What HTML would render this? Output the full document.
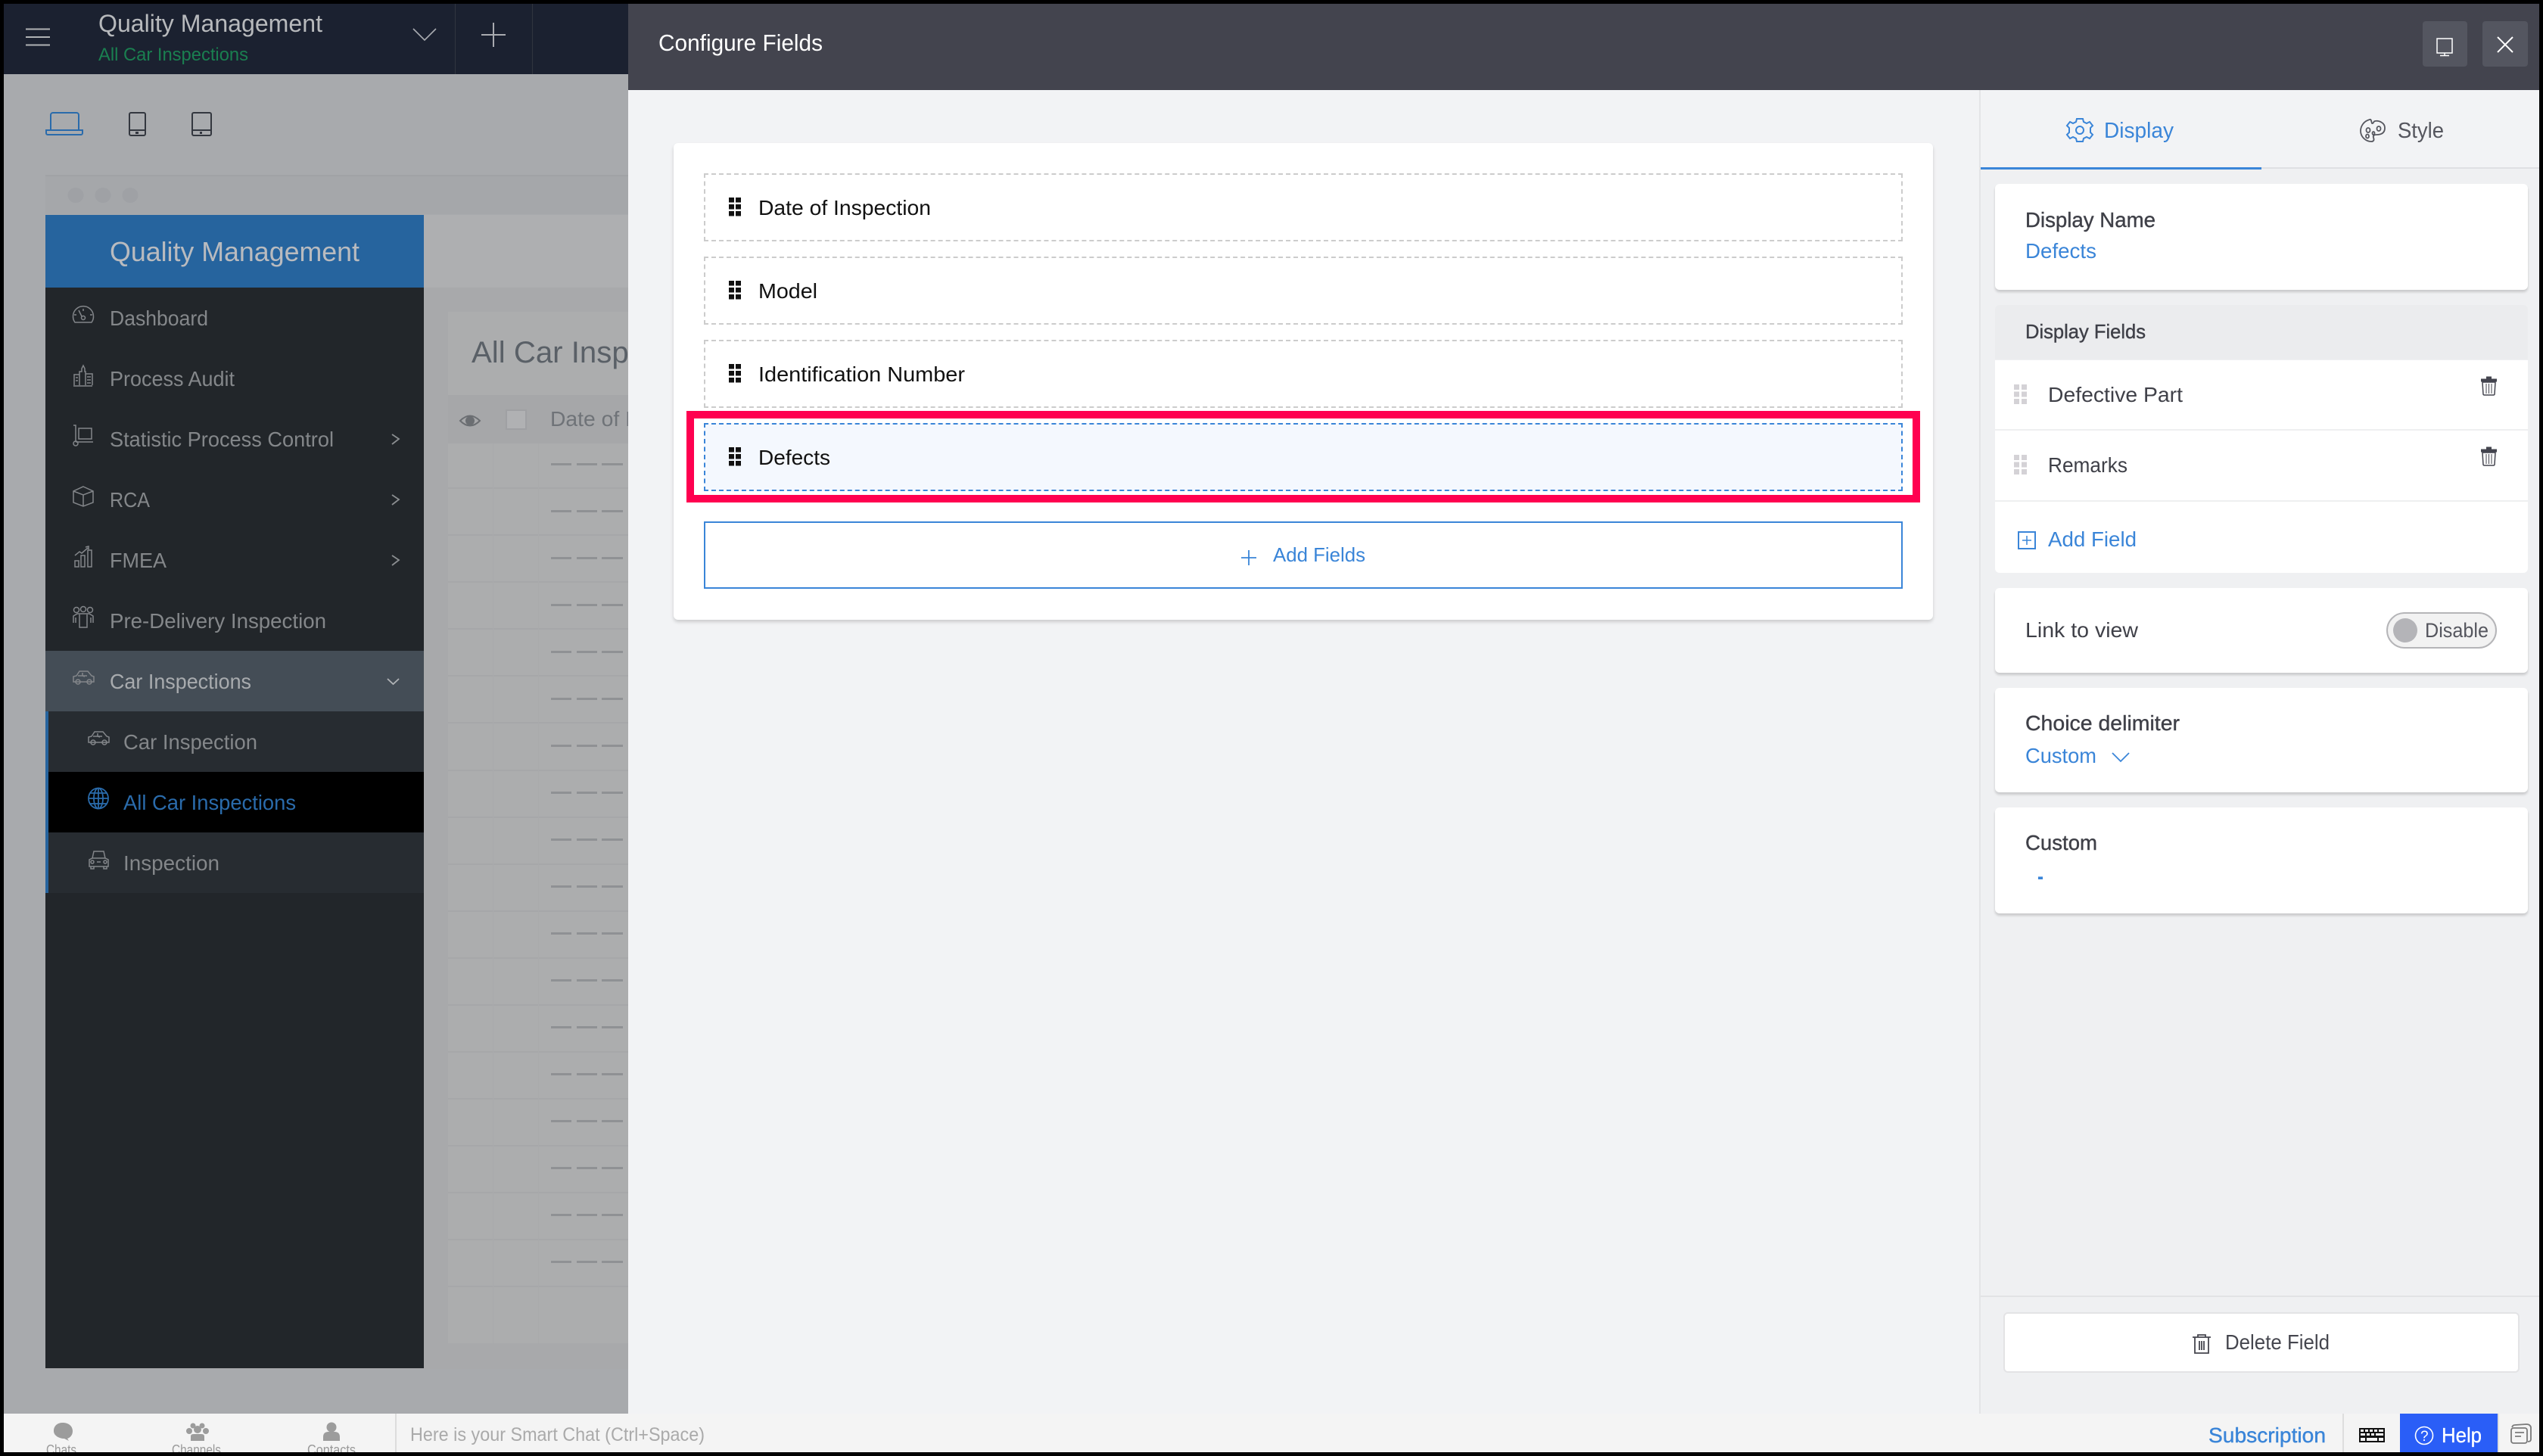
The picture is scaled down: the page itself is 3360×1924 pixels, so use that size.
<!DOCTYPE html>
<html><head><meta charset="utf-8"><title>Configure Fields</title>
<style>
html,body{margin:0;padding:0;background:#000;width:3360px;height:1924px;overflow:hidden}
.b{position:absolute;box-sizing:border-box}
svg{position:absolute;left:0;top:0;width:3360px;height:1924px}
text{font-family:"Liberation Sans",sans-serif;white-space:pre;transform:translate(-1px,-1px)}
.card{background:#fff;border-radius:6px;box-shadow:0 3px 3px rgba(0,0,0,.16)}
.dash{border:2px dashed #ccc;background:#fff}
</style></head><body>

<!-- dimmed app behind -->
<div class="b" style="left:5px;top:5px;width:825px;height:1863px;background:#a8aaad"></div>
<div class="b" style="left:5px;top:5px;width:825px;height:93px;background:#1b2130"></div>
<div class="b" style="left:601px;top:5px;width:1px;height:93px;background:#30353f"></div>
<div class="b" style="left:703px;top:5px;width:1px;height:93px;background:#30353f"></div>
<div class="b" style="left:60px;top:231px;width:770px;height:52px;background:#a5a7aa;border-top:2px solid #a0a2a5"></div>
<div class="b" style="left:60px;top:284px;width:770px;height:96px;background:#aeafb1"></div>
<div class="b" style="left:60px;top:380px;width:770px;height:1429px;background:#a8a9ab"></div>
<div class="b" style="left:60px;top:284px;width:500px;height:96px;background:#26649e"></div>
<div class="b" style="left:60px;top:380px;width:500px;height:1428px;background:#22262a"></div>
<div class="b" style="left:60px;top:860px;width:500px;height:80px;background:#444d56"></div>
<div class="b" style="left:60px;top:940px;width:500px;height:240px;background:#272c31"></div>
<div class="b" style="left:64px;top:1020px;width:496px;height:80px;background:#000"></div>
<div class="b" style="left:60px;top:940px;width:4px;height:240px;background:#26649e"></div>
<div class="b" style="left:592px;top:412px;width:238px;height:1363px;background:#acadae"></div>
<div class="b" style="left:592px;top:522px;width:238px;height:64px;background:#a6a7a9"></div>

<svg viewBox="0 0 3360 1924">
<!-- table lines -->
<g fill="#a6a7a9">
<rect x="592" y="644" width="238" height="2"/><rect x="592" y="706" width="238" height="2"/><rect x="592" y="768" width="238" height="2"/><rect x="592" y="830" width="238" height="2"/><rect x="592" y="892" width="238" height="2"/><rect x="592" y="954" width="238" height="2"/><rect x="592" y="1017" width="238" height="2"/><rect x="592" y="1079" width="238" height="2"/><rect x="592" y="1141" width="238" height="2"/><rect x="592" y="1203" width="238" height="2"/><rect x="592" y="1265" width="238" height="2"/><rect x="592" y="1327" width="238" height="2"/><rect x="592" y="1389" width="238" height="2"/><rect x="592" y="1451" width="238" height="2"/><rect x="592" y="1513" width="238" height="2"/><rect x="592" y="1575" width="238" height="2"/><rect x="592" y="1637" width="238" height="2"/><rect x="592" y="1699" width="238" height="2"/>
</g>
<g fill="#a9aaac"><rect x="651" y="586" width="1" height="1189"/><rect x="711" y="586" width="1" height="1189"/></g>
<defs><g id="dd" fill="#8f9194"><rect x="728" width="27" height="3"/><rect x="762" width="27" height="3"/><rect x="795" width="28" height="3"/></g></defs>
<use href="#dd" y="612"/><use href="#dd" y="674"/><use href="#dd" y="736"/><use href="#dd" y="798"/><use href="#dd" y="860"/><use href="#dd" y="922"/><use href="#dd" y="984"/><use href="#dd" y="1046"/><use href="#dd" y="1108"/><use href="#dd" y="1170"/><use href="#dd" y="1232"/><use href="#dd" y="1294"/><use href="#dd" y="1356"/><use href="#dd" y="1418"/><use href="#dd" y="1480"/><use href="#dd" y="1542"/><use href="#dd" y="1604"/><use href="#dd" y="1666"/>

<!-- top bar -->
<g stroke="#b0b2b5" stroke-width="2" fill="none">
<path d="M34 38.500H66M34 49H66M34 59.500H66"/>
</g>
<g stroke="#a9abb0" stroke-width="1.600" fill="none">
<path d="M546 38L561 53L576 38"/><path d="M652 30V62M636 46H668" stroke-width="2"/>
</g>
<text x="131" y="43" font-size="32" fill="#b7b9bc" textLength="296" lengthAdjust="spacingAndGlyphs">Quality Management</text>
<text x="131" y="81" font-size="24" fill="#1a7f50" textLength="198" lengthAdjust="spacingAndGlyphs">All Car Inspections</text>

<!-- device icons -->
<g fill="none" stroke-width="2">
<path stroke="#2a6bab" d="M67 171V152a3 3 0 0 1 3-3h31a3 3 0 0 1 3 3v19M61 172h48v4a2 2 0 0 1-2 2H63a2 2 0 0 1-2-2z"/>
<g stroke="#33373f"><rect x="171" y="149" width="21" height="30" rx="2"/><path d="M171 172h21"/><rect x="254" y="149" width="25" height="30" rx="2"/><path d="M254 172h25"/></g>
</g>
<rect x="179" y="174" width="4" height="3" fill="#33373f"/><rect x="264" y="174" width="3" height="3" fill="#33373f"/>
<g fill="#9fa1a5"><ellipse cx="100" cy="258" rx="10.500" ry="10"/><ellipse cx="136" cy="258" rx="10.500" ry="10"/><ellipse cx="172" cy="258" rx="10.500" ry="10"/></g>

<!-- sidebar text -->
<text x="146" y="346" font-size="36" fill="#b9bbbf" textLength="330" lengthAdjust="spacingAndGlyphs">Quality Management</text>
<g font-size="28" fill="#84878a">
<text x="146" y="431" textLength="130" lengthAdjust="spacingAndGlyphs">Dashboard</text>
<text x="146" y="511" textLength="165" lengthAdjust="spacingAndGlyphs">Process Audit</text>
<text x="146" y="591" textLength="296" lengthAdjust="spacingAndGlyphs">Statistic Process Control</text>
<text x="146" y="671" textLength="53" lengthAdjust="spacingAndGlyphs">RCA</text>
<text x="146" y="751" textLength="75" lengthAdjust="spacingAndGlyphs">FMEA</text>
<text x="146" y="831" textLength="286" lengthAdjust="spacingAndGlyphs">Pre-Delivery Inspection</text>
<text x="146" y="911" textLength="187" lengthAdjust="spacingAndGlyphs" fill="#a8abae">Car Inspections</text>
<text x="164" y="991" textLength="177" lengthAdjust="spacingAndGlyphs">Car Inspection</text>
<text x="164" y="1071" textLength="228" lengthAdjust="spacingAndGlyphs" fill="#2a6bab">All Car Inspections</text>
<text x="164" y="1151" textLength="127" lengthAdjust="spacingAndGlyphs">Inspection</text>
</g>
<!-- sidebar icons -->
<g fill="none" stroke="#83868a" stroke-width="1.500">
<path d="M99 426a13.500 13.500 0 1 1 22 0zM110 408v3M98 416h3M119 416h3M104 410l4 8"/><circle cx="110" cy="420" r="2.500"/>
<path d="M98 509v-14h7v14M105 509v-18h3v-4l2-4 2 4v4h1v18M113 509v-15h9v15M97 510h25M100 499h3M100 503h3M115 498h5M115 502h5M115 506h5"/>
<path d="M97 562h3v22M100 584h23M104 566h17v14h-17z"/><circle cx="100" cy="586" r="3"/>
<path d="M110 643l13 6v15l-13 5-13-5v-15zM97 649l13 5 13-5M110 654v15"/>
<path d="M99 749v-8h5v8zM107 749v-15h5v15zM116 749v-22h5v22zM99 734l6-5 3 2 8-7M113 723l4-1v4"/>
<circle cx="101" cy="806" r="3.500"/><circle cx="110" cy="805" r="3.500"/><circle cx="119" cy="806" r="3.500"/>
<path d="M97 823v-9l5-3h16l5 3v9M105 812v17h10v-17M100 816v7M120 816v7"/>
<path d="M97 901v-7l4-1 4-6h11l5 6 3 1v7zM103 893h12M109 889v4l3 1"/><circle cx="103" cy="901" r="3"/><circle cx="118" cy="901" r="3"/>
<path d="M117 981v-7l4-1 4-6h11l5 6 3 1v7zM123 973h12M129 969v4l3 1"/><circle cx="123" cy="981" r="3"/><circle cx="138" cy="981" r="3"/>
<path d="M122 1134l2-9h13l2 9M118 1145v-9l4-2h17l4 2v9zM120 1145v3h4v-3M137 1145v3h4v-3M128 1139h5"/><circle cx="122" cy="1139" r="2"/><circle cx="139" cy="1139" r="2"/>
<path stroke-width="1.800" d="M518 574l9 6-9 7M518 654l9 6-9 7M518 734l9 6-9 7" stroke="#8b8e91"/>
<path stroke-width="1.800" d="M512 897l7.500 7 7.500-7" stroke="#b0b3b6"/>
</g>
<g fill="none" stroke="#2a6bab" stroke-width="1.800">
<ellipse cx="130" cy="1055" rx="13" ry="13.500"/><ellipse cx="130" cy="1055" rx="6" ry="13.500"/><path d="M117 1055h26M119 1048h22M119 1062h22M130 1042v27"/>
</g>

<!-- content -->
<text x="624" y="480" font-size="40" fill="#5a6067" textLength="335" lengthAdjust="spacingAndGlyphs">All Car Inspections</text>
<text x="728" y="564" font-size="28" fill="#6f7378" textLength="228" lengthAdjust="spacingAndGlyphs">Date of Inspection</text>
<path d="M608 556q13-13 26 0q-13 13-26 0z" fill="none" stroke="#6b6e72" stroke-width="2"/><circle cx="621" cy="556" r="6" fill="#6b6e72"/>
<rect x="669" y="542" width="26" height="25" fill="#b0b1b3" stroke="#9fa0a3" stroke-width="2"/>
</svg>

<!-- modal -->
<div class="b" style="left:830px;top:5px;width:2525px;height:1863px;background:#f2f3f5"></div>
<div class="b" style="left:830px;top:5px;width:2525px;height:114px;background:#43444e"></div>
<div class="b" style="left:3201px;top:28px;width:59px;height:60px;background:#545660;border-radius:4px"></div>
<div class="b" style="left:3280px;top:28px;width:60px;height:60px;background:#545660;border-radius:4px"></div>
<div class="b" style="left:890px;top:189px;width:1664px;height:630px;background:#fff;border-radius:6px;box-shadow:0 3px 5px rgba(0,0,0,.16)"></div>
<div class="b dash" style="left:930px;top:229px;width:1584px;height:90px"></div>
<div class="b dash" style="left:930px;top:339px;width:1584px;height:90px"></div>
<div class="b dash" style="left:930px;top:449px;width:1584px;height:90px"></div>
<div class="b" style="left:907px;top:543px;width:1630px;height:121px;border:10px solid #ff0050"></div>
<div class="b dash" style="left:930px;top:559px;width:1584px;height:90px;border-color:#3a85d8;background:#f4f8fe"></div>
<div class="b" style="left:930px;top:689px;width:1584px;height:89px;border:2px solid #3a85d8"></div>

<div class="b" style="left:2615px;top:119px;width:740px;height:1749px;background:#eff0f2;border-left:2px solid #e3e4e6"></div>
<div class="b" style="left:2617px;top:119px;width:738px;height:102px;background:#f2f3f5"></div>
<div class="b" style="left:2617px;top:221px;width:738px;height:2px;background:#dfe0e3"></div>
<div class="b" style="left:2617px;top:221px;width:371px;height:3px;background:#3a85d8"></div>
<div class="b card" style="left:2636px;top:243px;width:704px;height:140px"></div>
<div class="b" style="left:2636px;top:403px;width:704px;height:72px;background:#ebecee;border-radius:6px 6px 0 0"></div>
<div class="b" style="left:2636px;top:476px;width:704px;height:281px;background:#fff;border-radius:0 0 6px 6px"></div>
<div class="b" style="left:2636px;top:567px;width:704px;height:2px;background:#eeeff0"></div>
<div class="b" style="left:2636px;top:661px;width:704px;height:2px;background:#eeeff0"></div>
<div class="b card" style="left:2636px;top:777px;width:704px;height:112px"></div>
<div class="b" style="left:3153px;top:809px;width:146px;height:48px;border-radius:24px;background:#f2f2f2;border:2px solid #b5b5b8"></div>
<div class="b" style="left:3162px;top:817px;width:32px;height:32px;border-radius:50%;background:#b4b4b8"></div>
<div class="b card" style="left:2636px;top:909px;width:704px;height:138px"></div>
<div class="b card" style="left:2636px;top:1067px;width:704px;height:140px"></div>
<div class="b" style="left:2617px;top:1712px;width:738px;height:2px;background:#e2e3e5"></div>
<div class="b" style="left:2647px;top:1734px;width:682px;height:80px;background:#fff;border:2px solid #e3e3e5;border-radius:6px"></div>

<!-- bottom bar -->
<div class="b" style="left:5px;top:1868px;width:3350px;height:51px;background:#f4f4f4;overflow:hidden"></div>
<div class="b" style="left:522px;top:1868px;width:2px;height:51px;background:#dcdcdc"></div>
<div class="b" style="left:3095px;top:1868px;width:2px;height:51px;background:#dedede"></div>
<div class="b" style="left:3171px;top:1868px;width:129px;height:51px;background:#2a5ef7"></div>
<div class="b" style="left:3300px;top:1868px;width:2px;height:51px;background:#dedede"></div>

<svg viewBox="0 0 3360 1924">
<text x="871" y="68" font-size="31" fill="#fff" textLength="217" lengthAdjust="spacingAndGlyphs">Configure Fields</text>
<g fill="none" stroke="#fff" stroke-width="1.500">
<path d="M3220 51h20v19h-20zM3230 70v3M3224 73.500h12"/>
<path d="M3300 49l20 20M3320 49l-20 20" stroke-width="2"/>
</g>

<!-- drag handles -->
<defs>
<g id="dk" fill="#111"><rect width="7" height="6.500"/><rect x="9" width="7" height="6.500"/><rect y="9" width="7" height="6.500"/><rect x="9" y="9" width="7" height="6.500"/><rect y="18" width="7" height="6.500"/><rect x="9" y="18" width="7" height="6.500"/></g>
<g id="lt" fill="#d4d2d6"><rect width="7" height="7"/><rect x="10" width="7" height="7"/><rect y="9.500" width="7" height="7"/><rect x="10" y="9.500" width="7" height="7"/><rect y="19" width="7" height="7"/><rect x="10" y="19" width="7" height="7"/></g>
<g id="tr"><path d="M0 4.500h21v4H0zM7 4.500V1.500h7v3" fill="#43444e"/><path d="M2 9h17l-1 16a1.500 1.500 0 0 1-1.500 1H4.500A1.500 1.500 0 0 1 3 25z" fill="#fff" stroke="#43444e" stroke-width="1.500"/><path d="M7 11v13M10.500 11v13M14 11v13" stroke="#43444e" stroke-width="1"/></g>
</defs>
<use href="#dk" x="963" y="261"/><use href="#dk" x="963" y="371"/><use href="#dk" x="963" y="481"/><use href="#dk" x="963" y="591"/>
<g font-size="28" fill="#111">
<text x="1003" y="285" textLength="228" lengthAdjust="spacingAndGlyphs">Date of Inspection</text>
<text x="1003" y="395" textLength="78" lengthAdjust="spacingAndGlyphs">Model</text>
<text x="1003" y="505" textLength="273" lengthAdjust="spacingAndGlyphs">Identification Number</text>
<text x="1003" y="615" textLength="95" lengthAdjust="spacingAndGlyphs">Defects</text>
</g>
<path d="M1650 727v20M1640 737h20" stroke="#3a85d8" stroke-width="1.800" fill="none"/>
<text x="1683" y="743" font-size="26" fill="#3a85d8" textLength="122" lengthAdjust="spacingAndGlyphs">Add Fields</text>

<!-- tabs -->
<g fill="none" stroke="#3a85d8" stroke-width="2">
<circle cx="2748" cy="172" r="5"/>
<path d="M2744 157h8l1 4 4 2 4-2 4 5-3 3v6l3 3-4 5-4-2-4 2-1 4h-8l-1-4-4-2-4 2-4-5 3-3v-6l-3-3 4-5 4 2 4-2z"/>
</g>
<text x="2781" y="183" font-size="29" fill="#3a85d8" textLength="92" lengthAdjust="spacingAndGlyphs">Display</text>
<g fill="none" stroke="#55565e" stroke-width="1.800">
<path d="M3131 158c-8 2-12 9-12 15 0 8 7 14 14 14 4 0 4-3 3-5-1-3 1-4 4-4 6 0 11-2 11-9 0-7-8-10-13-9-2 0-2 4-4 3-1-3-1-6-3-5z"/>
<ellipse cx="3129" cy="172" rx="2.500" ry="3"/><ellipse cx="3128" cy="180" rx="2" ry="2.500"/><ellipse cx="3143" cy="170" rx="2.500" ry="3"/><ellipse cx="3136" cy="176" rx="1.500" ry="2"/>
</g>
<text x="3169" y="183" font-size="29" fill="#55565e" textLength="61" lengthAdjust="spacingAndGlyphs">Style</text>

<!-- right panel text -->
<g font-size="28" fill="#3f4048">
<text x="2677" y="301" textLength="172" lengthAdjust="spacingAndGlyphs" stroke="#3f4048" stroke-width=".4">Display Name</text>
<text x="2677" y="342" textLength="94" lengthAdjust="spacingAndGlyphs" fill="#3a85d8">Defects</text>
<text x="2677" y="448" font-size="26" textLength="159" lengthAdjust="spacingAndGlyphs" stroke="#3f4048" stroke-width=".4">Display Fields</text>
<text x="2707" y="532" textLength="178" lengthAdjust="spacingAndGlyphs">Defective Part</text>
<text x="2707" y="625" textLength="105" lengthAdjust="spacingAndGlyphs">Remarks</text>
<text x="2707" y="723" textLength="117" lengthAdjust="spacingAndGlyphs" fill="#3a85d8">Add Field</text>
<text x="2677" y="843" textLength="149" lengthAdjust="spacingAndGlyphs">Link to view</text>
<text x="3205" y="843" font-size="27" textLength="84" lengthAdjust="spacingAndGlyphs" fill="#55565e">Disable</text>
<text x="2677" y="966" textLength="204" lengthAdjust="spacingAndGlyphs" stroke="#3f4048" stroke-width=".4">Choice delimiter</text>
<text x="2677" y="1009" textLength="94" lengthAdjust="spacingAndGlyphs" fill="#3a85d8">Custom</text>
<text x="2677" y="1124" textLength="95" lengthAdjust="spacingAndGlyphs" stroke="#3f4048" stroke-width=".4">Custom</text>
<text x="2941" y="1784" textLength="138" lengthAdjust="spacingAndGlyphs" fill="#45464e">Delete Field</text>
</g>
<text x="2693" y="1169" font-size="30" font-weight="bold" fill="#3a85d8" textLength="8" lengthAdjust="spacingAndGlyphs">-</text>
<use href="#lt" x="2661" y="508"/><use href="#lt" x="2661" y="601"/>
<use href="#tr" x="3278" y="496"/><use href="#tr" x="3278" y="589"/>
<g fill="none" stroke="#3a85d8" stroke-width="2">
<rect x="2667" y="703" width="22" height="22"/><path d="M2678 708v12M2672 714h12" stroke-width="1.500"/>
<path d="M2791 995l11 11 11-11" stroke-width="1.800"/>
</g>
<g fill="none" stroke="#45464e" stroke-width="1.800">
<path d="M2897 1767h24M2904 1767v-3h10v3M2900 1767v21h18v-21M2906 1772v12M2909 1772v12M2912 1772v12"/>
</g>

<!-- bottom bar content -->
<g fill="#9c9c9c">
<path d="M83 1880c8 0 13 5 13 11s-4 9-7 10l2 3-6-3c-7 0-14-4-14-10 0-7 5-11 12-11z"/>
<circle cx="255" cy="1884" r="3.500"/><circle cx="267" cy="1884" r="3.500"/><circle cx="250" cy="1891" r="4"/><circle cx="272" cy="1891" r="4"/><circle cx="261" cy="1889" r="5"/>
<path d="M252 1904v-6q0-3 4-3h10q4 0 4 3v6z"/>
<circle cx="438" cy="1886" r="6.500"/><path d="M427 1904v-5q0-7 7-7h8q7 0 7 7v5z"/>
</g>
<g font-size="18" fill="#999">
<text x="62" y="1923" textLength="40" lengthAdjust="spacingAndGlyphs">Chats</text>
<text x="228" y="1923" textLength="65" lengthAdjust="spacingAndGlyphs">Channels</text>
<text x="407" y="1923" textLength="64" lengthAdjust="spacingAndGlyphs">Contacts</text>
</g>
<rect x="0" y="1919" width="3360" height="5" fill="#000"/>
<text x="543" y="1905" font-size="25" fill="#aaa" textLength="389" lengthAdjust="spacingAndGlyphs">Here is your Smart Chat (Ctrl+Space)</text>
<text x="2919" y="1907" font-size="28" fill="#3a85d8" textLength="155" lengthAdjust="spacingAndGlyphs" stroke="#3a85d8" stroke-width=".4">Subscription</text>
<rect x="3117" y="1887" width="34" height="19" fill="#111"/>
<g fill="#f4f4f4">
<rect x="3119" y="1889" width="4" height="3"/><rect x="3125" y="1889" width="4" height="3"/><rect x="3131" y="1889" width="4" height="3"/><rect x="3137" y="1889" width="4" height="3"/><rect x="3143" y="1889" width="6" height="3"/>
<rect x="3119" y="1894" width="6" height="3"/><rect x="3127" y="1894" width="4" height="3"/><rect x="3133" y="1894" width="4" height="3"/><rect x="3139" y="1894" width="10" height="3"/>
<rect x="3119" y="1900" width="6" height="4"/><rect x="3127" y="1900" width="14" height="4"/><rect x="3143" y="1900" width="6" height="4"/>
</g>
<circle cx="3203" cy="1897" r="11.500" fill="none" stroke="#fff" stroke-width="1.600"/>
<text x="3199" y="1905" font-size="19" fill="#fff">?</text>
<text x="3227" y="1907" font-size="28" fill="#fff" textLength="53" lengthAdjust="spacingAndGlyphs" stroke="#fff" stroke-width=".3">Help</text>
<g fill="none" stroke="#7b7b7b" stroke-width="1.800">
<rect x="3318" y="1887" width="21" height="20" rx="3"/><path d="M3319 1886q1-3 4-3l15-1q5 0 6 4v16q0 3-4 3M3323 1893h12M3323 1898h8"/>
</g>
</svg>
</body></html>
